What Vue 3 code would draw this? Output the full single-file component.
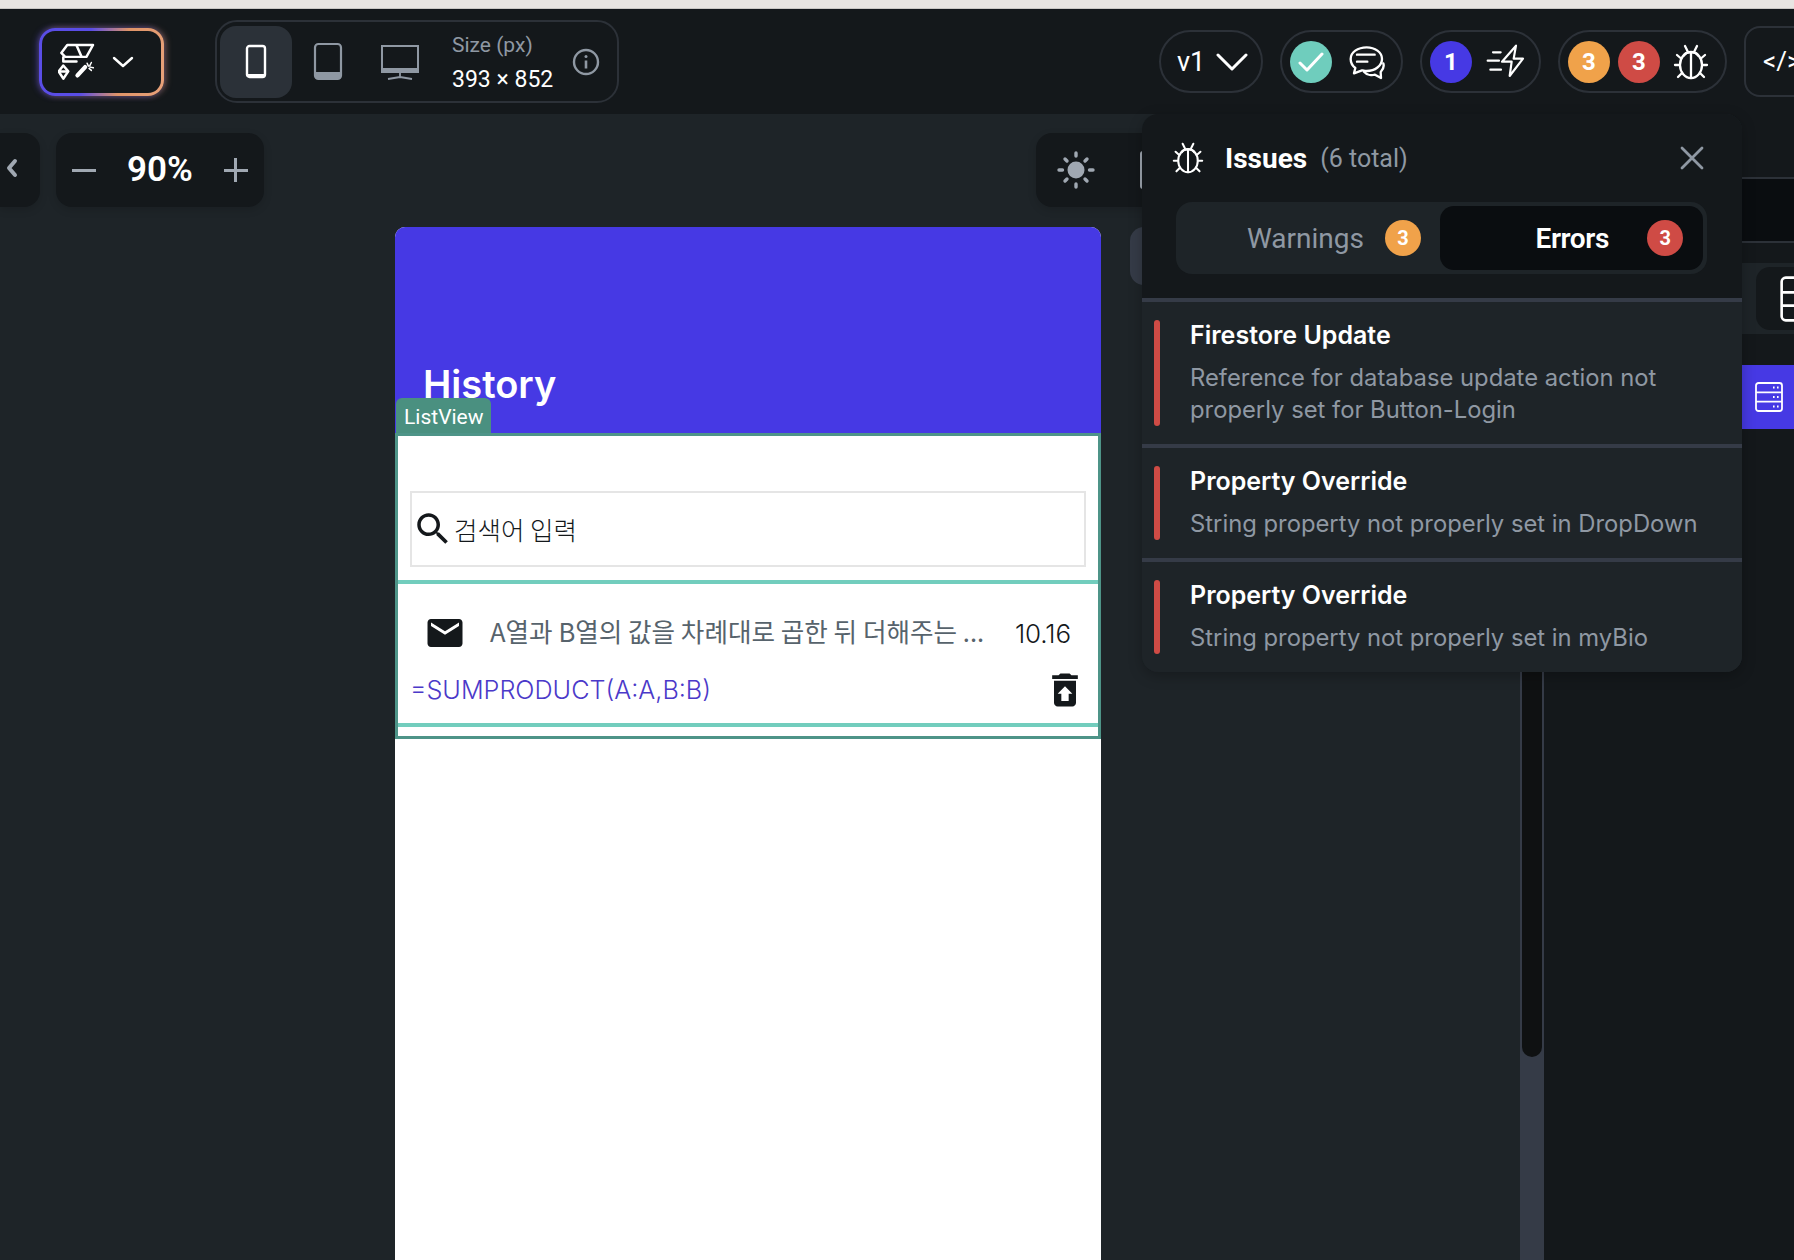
<template>
  <div class="page">
    <div class="strip"></div>

    <header class="topbar">
      <button class="logo-btn">
        <svg class="logo-icon" viewBox="55 70 110 112" fill="none" stroke="#fff" stroke-width="7.5" stroke-linejoin="round" stroke-linecap="round">
          <path d="M64 100 L82 76 H160 L140 112 H76 Z" />
          <path d="M110 77 L125 111" />
          <path d="M70 113 L70 126 H110" />
          <path d="M70 138 L56 156 L70 178 L85 156 Z" />
          <path d="M58 156 H83" />
          <path d="M113 168 L136 143" stroke-width="13" />
          <path d="M142 131 L146 140 M155 129 L150 139 M161 145 L151 143 M155 153 L148 147" stroke-width="4.5" />
        </svg>
        <svg class="logo-chevron" viewBox="0 0 22 12" fill="none" stroke="#fff" stroke-width="2.4" stroke-linecap="round" stroke-linejoin="round">
          <path d="M2 2 L11 10 L20 2" />
        </svg>
      </button>

      <div class="device-group">
        <div class="device device--active">
          <svg width="22" height="35" viewBox="0 0 22 35" fill="none">
            <rect x="2" y="2" width="18" height="31" rx="2.5" stroke="#fff" stroke-width="2.4" />
            <rect x="2" y="30" width="18" height="3" fill="#fff" />
          </svg>
        </div>
        <div class="device">
          <svg width="30" height="39" viewBox="0 0 30 39" fill="none">
            <rect x="2" y="2" width="26" height="35" rx="3.5" stroke="#8f98a3" stroke-width="2.2" />
            <path d="M2 30 H28 V33.5 A3.5 3.5 0 0 1 24.5 37 H5.5 A3.5 3.5 0 0 1 2 33.5 Z" fill="#8f98a3" />
          </svg>
        </div>
        <div class="device">
          <svg width="38" height="36" viewBox="0 0 38 36" fill="none">
            <rect x="1" y="2" width="36" height="26" stroke="#8f98a3" stroke-width="2" />
            <rect x="1" y="24" width="36" height="5" fill="#8f98a3" />
            <path d="M19 29 V33 M7 35 L19 33 L31 35" stroke="#8f98a3" stroke-width="1.8" />
          </svg>
        </div>
        <div class="size">
          <span class="size__label">Size (px)</span>
          <span class="size__value">393 × 852</span>
        </div>
        <svg class="info" width="28" height="28" viewBox="0 0 28 28" fill="none" stroke="#8f98a3" stroke-width="2.4">
          <circle cx="14" cy="14" r="12" />
          <path d="M14 12.5 V20.5" stroke-width="2.6" />
          <circle cx="14" cy="8.5" r="1.5" fill="#8f98a3" stroke="none" />
        </svg>
      </div>

      <div class="actions">
        <div class="pill pill--version">
          <span class="version">v1</span>
          <svg width="32" height="20" viewBox="0 0 32 20" fill="none" stroke="#fff" stroke-width="3" stroke-linecap="round" stroke-linejoin="round">
            <path d="M2 3 L16 17 L30 3" />
          </svg>
        </div>

        <div class="pill pill--chat">
          <span class="dot dot--teal">
            <svg width="26" height="22" viewBox="0 0 26 22" fill="none" stroke="#fff" stroke-width="3" stroke-linecap="round" stroke-linejoin="round">
              <path d="M2 12 L9 19 L24 3" />
            </svg>
          </span>
          <svg width="40" height="40" viewBox="198 54 120 120" fill="none" stroke="#fff" stroke-width="7" stroke-linecap="round" stroke-linejoin="round">
            <path d="M260 70 C233 70 212 85 212 105 C212 117 218 126 226 132 L222 148 L246 139 C251 140 255 141 260 141 C285 141 306 125 306 105 C306 85 285 70 260 70 Z" />
            <path d="M252 143 C262 155 278 154 285 152 L303 162 L302 144 C308 138 313 128 310 118" />
            <path d="M231 92 H284 M231 113 H262" />
          </svg>
        </div>

        <div class="pill pill--deploy">
          <span class="dot dot--purple">1</span>
          <svg width="40" height="40" viewBox="612 54 120 120" fill="none" stroke="#fff" stroke-width="6.5" stroke-linecap="round" stroke-linejoin="round">
            <path d="M705 65 L663 113 H692 L686 156 L726 104 H698 Z" />
            <path d="M636 85 H659 M620 110 H654 M628 137 H660" />
          </svg>
        </div>

        <div class="pill pill--issues">
          <span class="dot dot--orange">3</span>
          <span class="dot dot--red">3</span>
          <svg width="36" height="36" viewBox="0 0 36 36" fill="none" stroke="#fff" stroke-width="2.3" stroke-linecap="round" stroke-linejoin="round">
            <ellipse cx="18" cy="21" rx="11" ry="13" />
            <path d="M11 11.5 C13 7 23 7 25 11.5" />
            <path d="M18 9 V34" />
            <path d="M12 2 L14.5 7 M24 2 L21.5 7 M7.5 14 L4 11 M28.5 14 L32 11 M7 21 H2 M29 21 H34 M9 29 L5 33 M27 29 L31 33" />
          </svg>
        </div>

        <div class="code-box">&lt;/&gt;</div>
      </div>
    </header>

    <main class="workspace">
      <section class="canvas">
        <div class="canvas__toolbar">
          <div class="chip chip--back">
            <svg width="12" height="20" viewBox="0 0 12 20" fill="none" stroke="#a0a8b2" stroke-width="4" stroke-linecap="round" stroke-linejoin="round">
              <path d="M9 3 L3 10 L9 17" />
            </svg>
          </div>
          <div class="chip chip--zoom">
            <span class="zoom-sign"></span>
            <span class="zoom-value">90%</span>
            <span class="zoom-sign zoom-sign--plus"></span>
          </div>
          <div class="chip chip--theme">
            <svg width="38" height="38" viewBox="0 0 38 38" fill="none" stroke="#a0a8b2" stroke-width="3.4" stroke-linecap="round">
              <circle cx="19" cy="19" r="8.5" fill="#a0a8b2" stroke="none" />
              <path d="M19 2 V5 M19 33 V36 M2 19 H5.5 M32.5 19 H36 M8 8 L10 10 M28 28 L30 30 M8 30 L10 28 M28 10 L30 8" />
            </svg>
            <span class="theme-mark"></span>
          </div>
        </div>

        <div class="canvas__stage">
          <div class="phone">
            <div class="phone__header">
              <h1>History</h1>
              <span class="tag">ListView</span>
            </div>

            <div class="listview">
              <div class="search-wrap">
                <div class="search">
                  <svg width="42" height="42" viewBox="0 0 24 24" fill="#14181b">
                    <path d="M15.5 14h-.79l-.28-.27C15.41 12.59 16 11.11 16 9.5 16 5.91 13.09 3 9.5 3S3 5.91 3 9.5 5.91 16 9.5 16c1.61 0 3.09-.59 4.23-1.57l.27.28v.79l5 4.99L20.49 19l-4.99-5zm-6 0C7.01 14 5 11.99 5 9.5S7.01 5 9.5 5 14 7.01 14 9.5 11.99 14 9.5 14z" />
                  </svg>
                  <span>검색어 입력</span>
                </div>
              </div>

              <div class="entry">
                <div class="entry__top">
                  <svg width="42" height="42" viewBox="0 0 24 24" fill="#14181b">
                    <path d="M20 4H4c-1.1 0-1.99.9-1.99 2L2 18c0 1.1.9 2 2 2h16c1.1 0 2-.9 2-2V6c0-1.1-.9-2-2-2zm0 4l-8 5-8-5V6l8 5 8-5v2z" />
                  </svg>
                  <span class="entry__title">A열과 B열의 값을 차례대로 곱한 뒤 더해주는 ...</span>
                  <span class="entry__date">10.16</span>
                </div>
                <div class="entry__bottom">
                  <span class="entry__formula">=SUMPRODUCT(A:A,B:B)</span>
                  <svg width="44" height="44" viewBox="0 0 24 24" fill="#14181b">
                    <path d="M19 4h-3.5l-1-1h-5l-1 1H5v2h14zM6 7v12c0 1.1.9 2 2 2h8c1.1 0 2-.9 2-2V7H6zm8 7v4h-4v-4H8l4-4 4 4h-2z" />
                  </svg>
                </div>
              </div>
            </div>
          </div>
          <div class="side-chip"></div>
        </div>
      </section>

      <div class="track">
        <div class="track__thumb"></div>
      </div>

      <aside class="sidebar">
        <div class="sidebar__top"></div>
        <div class="sidebar__dark"></div>
        <div class="sidebar__gap"></div>
        <div class="sidebar__row">
          <div class="sidebar__chip">
            <svg width="46" height="46" viewBox="0 0 28 28" fill="none" stroke="#fff" stroke-width="1.6" stroke-linejoin="round">
              <rect x="1" y="1" width="26" height="26" rx="2.5" />
              <path d="M1 10 H27 M1 18 H27" />
            </svg>
          </div>
        </div>
        <div class="sidebar__tab">
          <svg width="28" height="30" viewBox="0 0 28 30" fill="none" stroke="#fff" stroke-width="1.8" stroke-linejoin="round">
            <rect x="1" y="1" width="26" height="28" rx="2.5" />
            <path d="M1 10.3 H27 M1 19.7 H27" />
            <path d="M18 5.5 H19.6 M22 5.5 H23.6 M18 15 H19.6 M22 15 H23.6 M18 24.5 H19.6 M22 24.5 H23.6" stroke-width="2.2" />
          </svg>
        </div>
      </aside>

      <section class="issues">
        <div class="issues__head">
          <div class="issues__title">
            <svg width="32" height="34" viewBox="0 0 36 36" fill="none" stroke="#fff" stroke-width="2.3" stroke-linecap="round" stroke-linejoin="round">
              <ellipse cx="18" cy="21" rx="11" ry="13" />
              <path d="M11 11.5 C13 7 23 7 25 11.5" />
              <path d="M18 9 V34" />
              <path d="M12 2 L14.5 7 M24 2 L21.5 7 M7.5 14 L4 11 M28.5 14 L32 11 M7 21 H2 M29 21 H34 M9 29 L5 33 M27 29 L31 33" />
            </svg>
            <strong>Issues</strong>
            <span>(6 total)</span>
            <svg class="issues__close" width="24" height="24" viewBox="0 0 24 24" fill="none" stroke="#8f98a3" stroke-width="2.8" stroke-linecap="round">
              <path d="M2 2 L22 22 M22 2 L2 22" />
            </svg>
          </div>

          <div class="tabs">
            <div class="tab tab--warn">
              <span>Warnings</span>
              <span class="tab__badge tab__badge--orange">3</span>
            </div>
            <div class="tab tab--active">
              <span>Errors</span>
              <span class="tab__badge tab__badge--red">3</span>
            </div>
          </div>
        </div>

        <article v-for="issue in issues" :key="issue.body" class="issue">
          <span class="issue__bar"></span>
          <div>
            <h3>{{ issue.title }}</h3>
            <p>{{ issue.body }}</p>
          </div>
        </article>
      </section>
    </main>
  </div>
</template>

<script setup>
const issues = [
  {
    title: 'Firestore Update',
    body: 'Reference for database update action not properly set for Button-Login',
  },
  {
    title: 'Property Override',
    body: 'String property not properly set in DropDown',
  },
  {
    title: 'Property Override',
    body: 'String property not properly set in myBio',
  },
];
</script>

<style>
html,
body {
  margin: 0;
  background: #14181b;
}
</style>

<style scoped>
.page {
  position: relative;
  width: 1794px;
  height: 1260px;
  overflow: hidden;
  background: #14181b;
  color: #fff;
  font-family: Roboto, "Noto Sans", sans-serif;
}

.strip {
  height: 8px;
  background: #e8e5e2;
  border-bottom: 1px solid #c9c7c4;
}

.topbar {
  display: flex;
  align-items: center;
  height: 105px;
  background: #14181b;
}

.logo-btn {
  display: flex;
  align-items: center;
  box-sizing: border-box;
  width: 125px;
  height: 68px;
  margin-left: 39px;
  padding: 0 0 0 16px;
  border: 3px solid transparent;
  border-radius: 16px;
  background:
    linear-gradient(#14181b, #14181b) padding-box,
    linear-gradient(100deg, #5a4de6 0%, #5a4de6 38%, #e09468 66%, #e8a27a 100%) border-box;
  box-shadow: -2px 0 6px rgba(90, 77, 230, 0.45), 2px 0 6px rgba(232, 162, 122, 0.4);
}

.logo-icon {
  width: 37px;
  height: 37px;
}

.logo-chevron {
  width: 22px;
  height: 12px;
  margin-left: 17px;
}

.device-group {
  display: flex;
  align-items: center;
  box-sizing: border-box;
  width: 404px;
  height: 83px;
  margin-left: 51px;
  padding-left: 3px;
  border: 2px solid #2c3138;
  border-radius: 22px;
}

.device {
  display: flex;
  align-items: center;
  justify-content: center;
  width: 72px;
  height: 72px;
  border-radius: 16px;
}

.device--active {
  background: #2b3138;
}

.size {
  display: flex;
  flex-direction: column;
  margin-left: 16px;
  padding-top: 2px;
  width: 120px;
}

.size__label {
  font-size: 21px;
  line-height: 28px;
  color: #8f98a3;
}

.size__value {
  margin-top: 6px;
  font-size: 23px;
  line-height: 30px;
  color: #fff;
}

.actions {
  display: flex;
  align-items: center;
  gap: 17px;
  margin-left: auto;
}

.pill {
  display: flex;
  align-items: center;
  box-sizing: border-box;
  height: 63px;
  border: 2px solid #2c3138;
  border-radius: 32px;
}

.pill--version {
  width: 104px;
  padding-left: 16px;
  gap: 11px;
}

.version {
  font-size: 27px;
}

.pill--chat {
  width: 123px;
  padding-left: 8px;
  gap: 14px;
}

.pill--deploy {
  width: 121px;
  padding-left: 8px;
  gap: 13px;
}

.pill--issues {
  width: 169px;
  padding-left: 8px;
  gap: 8px;
}

.pill--issues svg {
  margin-left: 5px;
}

.dot {
  display: flex;
  align-items: center;
  justify-content: center;
  width: 42px;
  height: 42px;
  border-radius: 50%;
  font-size: 24px;
  font-weight: 700;
  color: #fff;
}

.dot--teal {
  background: #6fcdbd;
}

.dot--purple {
  background: #4639e4;
}

.dot--orange {
  background: #f0a24a;
}

.dot--red {
  background: #cf4b45;
}

.code-box {
  box-sizing: border-box;
  width: 70px;
  height: 71px;
  margin-right: -20px;
  padding-left: 17px;
  border: 2px solid #2c3138;
  border-radius: 16px;
  font-size: 26px;
  line-height: 66px;
}

.workspace {
  position: relative;
  display: flex;
  height: 1146px;
}

.canvas {
  width: 1520px;
  background: #1e2428;
  overflow: hidden;
}

.canvas__toolbar {
  display: flex;
  gap: 16px;
  padding-top: 19px;
}

.chip {
  display: flex;
  align-items: center;
  height: 74px;
  background: #14181b;
  border-radius: 16px;
  box-shadow: 0 3px 8px rgba(0, 0, 0, 0.14);
}

.chip--back {
  width: 40px;
  padding: 0 0 4px 6px;
  box-sizing: border-box;
  border-radius: 0 16px 16px 0;
}

.chip--zoom {
  justify-content: space-between;
  box-sizing: border-box;
  width: 208px;
  padding: 0 16px;
}

.zoom-value {
  font-size: 35px;
  font-weight: 600;
  margin-bottom: 2px;
}

.zoom-sign {
  position: relative;
  width: 24px;
  height: 3px;
  background: #a0a8b2;
}

.zoom-sign--plus::after {
  content: "";
  position: absolute;
  left: 10.5px;
  top: -10.5px;
  width: 3px;
  height: 24px;
  background: #a0a8b2;
}

.chip--theme {
  margin-left: 756px;
  width: 200px;
  padding-left: 21px;
  box-sizing: border-box;
}

.theme-mark {
  width: 10px;
  height: 38px;
  margin-left: 45px;
  border-radius: 3px;
  background: #a0a8b2;
}

.canvas__stage {
  display: flex;
  gap: 29px;
  padding: 20px 0 0 395px;
}

.phone {
  flex: none;
  width: 706px;
  height: 1100px;
  background: #fff;
  border-radius: 10px 10px 0 0;
  overflow: hidden;
}

.phone__header {
  position: relative;
  display: flex;
  align-items: flex-end;
  box-sizing: border-box;
  height: 206px;
  padding: 0 0 26px 28px;
  background: #4639e4;
}

.phone__header h1 {
  margin: 0;
  font-family: Inter, sans-serif;
  font-size: 38px;
  font-weight: 600;
  line-height: 46px;
  color: #fff;
}

.tag {
  position: absolute;
  left: 1px;
  bottom: 0;
  box-sizing: border-box;
  height: 35px;
  padding: 0 7px 0 8px;
  background: #4a9080;
  border-radius: 6px 6px 0 0;
  font-size: 21px;
  line-height: 38px;
  color: #fff;
}

.listview {
  box-sizing: border-box;
  height: 306px;
  border: 3px solid #4e9488;
}

.search-wrap {
  box-sizing: border-box;
  height: 148px;
  padding: 55px 12px 13px;
  border-bottom: 4px solid #72cdbd;
}

.search {
  display: flex;
  align-items: center;
  box-sizing: border-box;
  height: 76px;
  border: 2px solid #e5e5e5;
  font-family: "Noto Sans CJK KR", sans-serif;
  font-size: 25.5px;
  font-weight: 300;
  color: #14181b;
}

.search span {
  margin-bottom: 2px;
}

.entry {
  box-sizing: border-box;
  height: 143px;
  padding-top: 30px;
  border-bottom: 4px solid #72cdbd;
}

.entry__top {
  display: flex;
  align-items: center;
  height: 38px;
  padding: 0 27px 0 26px;
}

.entry__title {
  flex: 1;
  margin: 0 0 6px 24px;
  font-family: "Noto Sans CJK KR", sans-serif;
  font-size: 25.6px;
  font-weight: 400;
  color: #57636c;
  white-space: nowrap;
}

.entry__date {
  font-family: Inter, sans-serif;
  font-size: 26px;
  font-weight: 300;
  letter-spacing: -0.1px;
  color: #14181b;
}

.entry__bottom {
  display: flex;
  align-items: center;
  justify-content: space-between;
  height: 40px;
  margin-top: 18px;
  padding: 0 11px 0 12px;
}

.entry__formula {
  font-family: Inter, sans-serif;
  font-size: 25.2px;
  font-weight: 300;
  color: #4b39c9;
  margin-bottom: 1px;
}

.side-chip {
  flex: none;
  width: 60px;
  height: 58px;
  background: #353b47;
  border-radius: 14px;
}

.track {
  width: 24px;
  background: #353b47;
}

.track__thumb {
  width: 20px;
  height: 943px;
  margin-left: 2px;
  background: #0f1112;
  border-radius: 0 0 10px 10px;
}

.sidebar {
  width: 250px;
  background: #14181b;
}

.sidebar__top {
  height: 63px;
  border-bottom: 2px solid #2c3138;
}

.sidebar__dark {
  height: 62px;
  background: #0a0d10;
  border-bottom: 2px solid #2c3138;
}

.sidebar__gap {
  height: 20px;
}

.sidebar__row {
  box-sizing: border-box;
  height: 71px;
  padding: 4px 0 0 212px;
  background: #1e2428;
}

.sidebar__chip {
  box-sizing: border-box;
  width: 60px;
  height: 63px;
  padding: 9px 0 0 24px;
  background: #14181b;
  border-radius: 14px 0 0 14px;
  overflow: hidden;
}

.sidebar__tab {
  display: flex;
  align-items: center;
  box-sizing: border-box;
  height: 64px;
  margin-top: 31px;
  padding-left: 211px;
  background: #4639e4;
}

.issues {
  position: absolute;
  left: 1142px;
  top: 0;
  width: 600px;
  background: #1e2428;
  border-radius: 16px;
  overflow: hidden;
  box-shadow: 0 4px 14px rgba(0, 0, 0, 0.25);
}

.issues__head {
  box-sizing: border-box;
  height: 188px;
  padding-top: 27px;
  background: #14181b;
  border-bottom: 4px solid #353b47;
}

.issues__title {
  display: flex;
  align-items: center;
  height: 34px;
  padding-left: 30px;
}

.issues__title strong {
  margin-left: 21px;
  font-size: 28px;
  font-weight: 700;
}

.issues__title span {
  margin-left: 13px;
  font-size: 25px;
  color: #8f98a3;
}

.issues__close {
  margin-left: auto;
  margin-right: 38px;
}

.tabs {
  display: flex;
  box-sizing: border-box;
  width: 531px;
  height: 72px;
  margin: 27px 0 0 34px;
  padding: 4px;
  background: #1e2428;
  border-radius: 16px;
}

.tab {
  display: flex;
  align-items: center;
  justify-content: flex-end;
  box-sizing: border-box;
  font-size: 28px;
  color: #8f98a3;
}

.tab--warn {
  width: 260px;
  padding-right: 19px;
  gap: 21px;
}

.tab--active {
  width: 263px;
  padding-right: 20px;
  gap: 38px;
  background: #0a0d10;
  border-radius: 14px;
  color: #fff;
  font-weight: 600;
  letter-spacing: -0.4px;
}

.tab__badge {
  display: flex;
  align-items: center;
  justify-content: center;
  width: 36px;
  height: 36px;
  border-radius: 50%;
  font-size: 20px;
  font-weight: 700;
  color: #fff;
}

.tab__badge--orange {
  background: #f0a24a;
}

.tab__badge--red {
  background: #cf4b45;
}

.issue {
  display: flex;
  gap: 30px;
  padding: 18px 12px;
  background: #1e2428;
  border-bottom: 4px solid #353b47;
  font-family: Inter, sans-serif;
}

.issue:last-child {
  border-bottom: 0;
}

.issue__bar {
  flex: none;
  width: 6px;
  background: #cf4b45;
  border-radius: 3px;
}

.issue h3 {
  margin: 0 0 12px;
  font-size: 25px;
  font-weight: 600;
  line-height: 30px;
  color: #fff;
}

.issue p {
  margin: 0;
  font-size: 23.8px;
  line-height: 32px;
  color: #8f98a3;
}
</style>
